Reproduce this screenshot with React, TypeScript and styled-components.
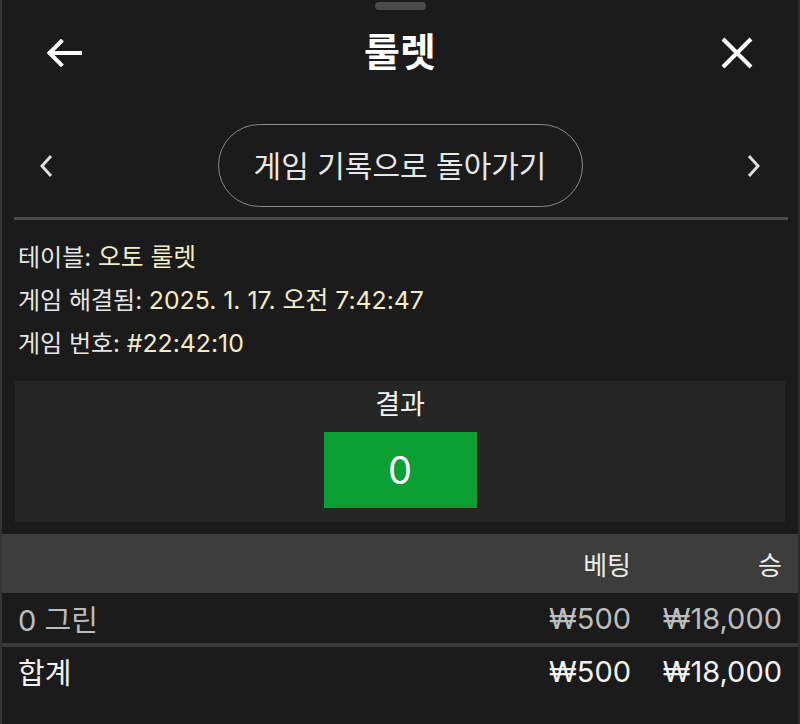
import React from 'react';
import styled, { createGlobalStyle } from 'styled-components';

const GlobalStyle = createGlobalStyle`
  html, body {
    margin: 0;
    padding: 0;
    background: #1b1b1b;
  }
  * {
    box-sizing: border-box;
  }
`;

const Sheet = styled.div`
  width: 800px;
  height: 724px;
  background: #1b1b1b;
  border-left: 2px solid #343434;
  border-right: 2px solid #2c2c2c;
  font-family: 'Inter', 'Noto Sans CJK KR', 'Noto Sans', sans-serif;
  color: #f2f2f2;
  overflow: hidden;
  display: flex;
  flex-direction: column;
`;

const Handle = styled.div`
  width: 51px;
  height: 8px;
  margin: 2px auto 0;
  border-radius: 4px;
  background: #4b4b4b;
`;

const Header = styled.div`
  height: 86px;
  padding: 0 44px;
  display: grid;
  grid-template-columns: 1fr auto 1fr;
  align-items: center;
`;

const Title = styled.div`
  font-size: 39px;
  font-weight: 700;
  line-height: 1;
  color: #ffffff;
  margin-top: -4px;
`;

const IconBtn = styled.div<{ $end?: boolean }>`
  display: flex;
  justify-self: ${p => (p.$end ? 'end' : 'start')};
`;

const NavRow = styled.div`
  margin-top: 28px;
  height: 83px;
  padding: 0 37px;
  display: grid;
  grid-template-columns: 1fr auto 1fr;
  align-items: center;
`;

const Pill = styled.div`
  width: 365px;
  height: 83px;
  border: 1.5px solid #8a8a8a;
  border-radius: 42px;
  display: flex;
  align-items: center;
  justify-content: center;
  font-size: 30px;
  line-height: 1;
  color: #e8e8e8;
`;

const Divider = styled.div`
  height: 3px;
  margin: 10px 10px 0 12px;
  background: #4a4a4a;
`;

const Info = styled.div`
  margin-top: 16px;
  padding: 0 16px;
  display: flex;
  flex-direction: column;
`;

const InfoLine = styled.div`
  height: 43px;
  line-height: 43px;
  font-size: 24px;
  color: #e6e6e6;
`;

const Value = styled.span`
  font-size: 24.8px;
  color: #f3ecc9;
`;

const ResultPanel = styled.div`
  margin: 16px 13px 0;
  height: 141px;
  background: #262626;
  display: flex;
  flex-direction: column;
  align-items: center;
  padding-top: 9px;
`;

const ResultLabel = styled.div`
  height: 30px;
  line-height: 30px;
  font-size: 27px;
  color: #f4f4f4;
`;

const ResultBox = styled.div`
  margin-top: 12px;
  width: 153px;
  height: 76px;
  background: #0a9e33;
  display: flex;
  align-items: center;
  justify-content: center;
  font-size: 38px;
  color: #ffffff;
`;

const Table = styled.div`
  margin-top: 12px;
  display: flex;
  flex-direction: column;
`;

const Row = styled.div<{ $variant: 'head' | 'item' | 'total' }>`
  display: grid;
  grid-template-columns: 1fr auto 151px;
  align-items: center;
  padding: 0 16px;
  height: ${p => (p.$variant === 'head' ? 59 : p.$variant === 'item' ? 50 : 52)}px;
  background: ${p => (p.$variant === 'head' ? '#3d3d3d' : '#1b1b1b')};
  border-top: ${p => (p.$variant === 'total' ? '4px solid #393939' : 'none')};
  font-size: ${p => (p.$variant === 'head' ? 26 : 29)}px;
  color: ${p =>
    p.$variant === 'head' ? '#ececec' : p.$variant === 'item' ? '#bdbdbd' : '#f2f2f2'};
`;

const Cell = styled.div<{ $right?: boolean }>`
  text-align: ${p => (p.$right ? 'right' : 'left')};
  white-space: nowrap;
`;

const BackIcon = () => (
  <svg width="36" height="28" viewBox="0 0 36 28" fill="none">
    <path d="M34 14H4M15 2.5L3.5 14L15 25.5" stroke="#fff" strokeWidth="4" strokeLinecap="square" />
  </svg>
);

const CloseIcon = () => (
  <svg width="34" height="32" viewBox="0 0 34 32" fill="none">
    <path d="M3 2L31 30M31 2L3 30" stroke="#fff" strokeWidth="4" />
  </svg>
);

const Chevron = ({ right }: { right?: boolean }) => (
  <svg width="16" height="24" viewBox="0 0 16 24" fill="none">
    <path
      d={right ? 'M4 2L13 12L4 22' : 'M12 2L3 12L12 22'}
      stroke="#dcdcdc"
      strokeWidth="3"
    />
  </svg>
);

const rows = [{ name: '0 그린', bet: '₩500', win: '₩18,000' }];

export default function App() {
  return (
    <>
      <GlobalStyle />
      <Sheet>
        <Handle />
        <Header>
          <IconBtn>
            <BackIcon />
          </IconBtn>
          <Title>룰렛</Title>
          <IconBtn $end>
            <CloseIcon />
          </IconBtn>
        </Header>

        <NavRow>
          <IconBtn>
            <Chevron />
          </IconBtn>
          <Pill>게임 기록으로 돌아가기</Pill>
          <IconBtn $end>
            <Chevron right />
          </IconBtn>
        </NavRow>
        <Divider />

        <Info>
          <InfoLine>
            테이블: <Value>오토 룰렛</Value>
          </InfoLine>
          <InfoLine>
            게임 해결됨: <Value>2025. 1. 17. 오전 7:42:47</Value>
          </InfoLine>
          <InfoLine>
            게임 번호: <Value>#22:42:10</Value>
          </InfoLine>
        </Info>

        <ResultPanel>
          <ResultLabel>결과</ResultLabel>
          <ResultBox>0</ResultBox>
        </ResultPanel>

        <Table>
          <Row $variant="head">
            <Cell />
            <Cell $right>베팅</Cell>
            <Cell $right>승</Cell>
          </Row>
          {rows.map(r => (
            <Row $variant="item" key={r.name}>
              <Cell>{r.name}</Cell>
              <Cell $right>{r.bet}</Cell>
              <Cell $right>{r.win}</Cell>
            </Row>
          ))}
          <Row $variant="total">
            <Cell>합계</Cell>
            <Cell $right>₩500</Cell>
            <Cell $right>₩18,000</Cell>
          </Row>
        </Table>
      </Sheet>
    </>
  );
}
